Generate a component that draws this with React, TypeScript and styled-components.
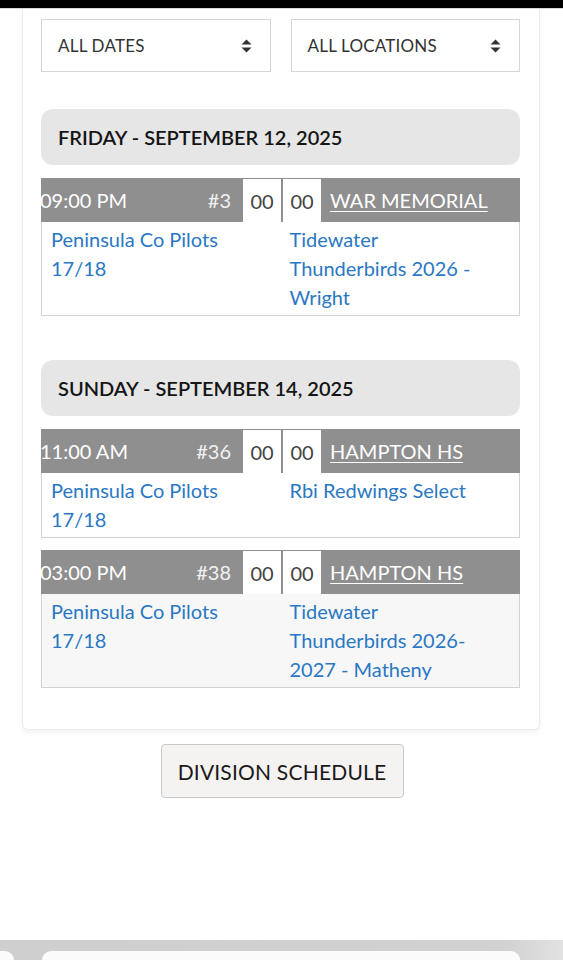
import React from 'react';
import styled, { createGlobalStyle } from 'styled-components';

const GlobalStyle = createGlobalStyle`
  html, body {
    margin: 0;
    padding: 0;
    background: #ffffff;
  }
  body {
    font-family: Lato, "Noto Sans", "Liberation Sans", sans-serif;
  }
  * {
    box-sizing: border-box;
  }
`;

const Page = styled.div`
  width: 563px;
  height: 960px;
  display: flex;
  flex-direction: column;
  overflow: hidden;
  background: #ffffff;
`;

const TopBar = styled.div`
  height: 9px;
  background: #000000;
  border-bottom: 1px solid #d8d8d8;
  flex-shrink: 0;
`;

const Card = styled.div`
  margin: 0 23px 0 22px;
  padding: 10px 19px 41px 18px;
  border: 1px solid #ececec;
  border-top: none;
  border-radius: 0 0 6px 6px;
  box-shadow: 0 3px 6px rgba(0, 0, 0, 0.05);
  background: #ffffff;
`;

const Filters = styled.div`
  display: grid;
  grid-template-columns: 1fr 1fr;
  gap: 20px;
  margin-bottom: 37px;
`;

const Select = styled.div`
  height: 53px;
  border: 1px solid #d6d6d6;
  display: flex;
  align-items: center;
  justify-content: space-between;
  padding: 0 18px 0 16px;
  font-size: 17px;
  color: #333333;
  letter-spacing: 0.2px;
`;

const DateHeader = styled.div`
  height: 56px;
  border-radius: 12px;
  background: #e6e6e6;
  display: flex;
  align-items: center;
  padding-left: 17px;
  font-size: 20px;
  font-weight: 600;
  color: #151515;
  margin-bottom: 13px;
`;

const Day = styled.section`
  margin-bottom: 44px;
  &:last-child {
    margin-bottom: 0;
  }
`;

const Game = styled.div`
  margin-bottom: 12px;
  &:last-child {
    margin-bottom: 0;
  }
`;

const GameHead = styled.div`
  height: 44px;
  background: #8f8f8f;
  display: flex;
  align-items: stretch;
  color: #ffffff;
  font-size: 20px;
`;

const Time = styled.div`
  width: 150px;
  display: flex;
  align-items: center;
  margin-left: -1px;
`;

const GameNo = styled.div`
  width: 53px;
  display: flex;
  align-items: center;
  justify-content: flex-end;
  padding-right: 12px;
  color: #f2f2f2;
`;

const Score = styled.div`
  width: 38px;
  margin-top: 1px;
  background: #ffffff;
  color: #444444;
  display: flex;
  align-items: center;
  justify-content: center;
  & + & {
    margin-left: 2px;
  }
`;

const Location = styled.a`
  display: flex;
  align-items: center;
  padding-left: 9px;
  color: #ffffff;
  text-decoration: underline;
  text-underline-offset: 3px;
  text-decoration-thickness: 1px;
`;

const GameBody = styled.div<{ $alt?: boolean }>`
  display: grid;
  grid-template-columns: 1fr 1fr;
  padding: 3px 0;
  border: 1px solid #d2d2d2;
  border-top: none;
  background: ${({ $alt }) => ($alt ? '#f7f7f7' : '#ffffff')};
`;

const Team = styled.a`
  padding: 0 34px 0 9px;
  font-size: 20px;
  line-height: 29px;
  color: #2a78c4;
  text-decoration: none;
`;

const ButtonRow = styled.div`
  display: flex;
  justify-content: center;
  margin-top: 14px;
`;

const ScheduleButton = styled.button`
  width: 243px;
  height: 54px;
  margin-left: 1px;
  background: #f5f3f1;
  border: 1px solid #c9c9c9;
  border-radius: 4px;
  font-family: inherit;
  font-size: 21px;
  color: #1a1a1a;
  letter-spacing: 0.2px;
`;

const Toolbar = styled.div`
  margin-top: auto;
  height: 20px;
  background: linear-gradient(90deg, #cfcfcf 0%, #d2d2d2 90%, #e2e2e2 100%);
  display: flex;
  align-items: flex-end;
  flex-shrink: 0;
`;

const ToolbarTab = styled.div<{ $w: number; $ml: number }>`
  width: ${({ $w }) => $w}px;
  margin-left: ${({ $ml }) => $ml}px;
  height: 9px;
  background: #fbfbfb;
  border-radius: 14px 14px 0 0;
`;

const Arrows = () => (
  <svg width="11" height="14" viewBox="0 0 11 14">
    <path d="M5.5 0.5 L10.5 5.5 L0.5 5.5 Z" fill="#333" />
    <path d="M0.5 8.5 L10.5 8.5 L5.5 13.5 Z" fill="#333" />
  </svg>
);

type GameData = {
  time: string;
  no: string;
  location: string;
  home: string;
  away: string;
  alt?: boolean;
};

const days: { label: string; games: GameData[] }[] = [
  {
    label: 'FRIDAY - SEPTEMBER 12, 2025',
    games: [
      {
        time: '09:00 PM',
        no: '#3',
        location: 'WAR MEMORIAL',
        home: 'Peninsula Co Pilots 17/18',
        away: 'Tidewater Thunderbirds 2026 - Wright',
      },
    ],
  },
  {
    label: 'SUNDAY - SEPTEMBER 14, 2025',
    games: [
      {
        time: '11:00 AM',
        no: '#36',
        location: 'HAMPTON HS',
        home: 'Peninsula Co Pilots 17/18',
        away: 'Rbi Redwings Select',
      },
      {
        time: '03:00 PM',
        no: '#38',
        location: 'HAMPTON HS',
        home: 'Peninsula Co Pilots 17/18',
        away: 'Tidewater Thunderbirds 2026-2027 - Matheny',
        alt: true,
      },
    ],
  },
];

export default function App() {
  return (
    <>
      <GlobalStyle />
      <Page>
        <TopBar />
        <Card>
          <Filters>
            <Select>
              ALL DATES
              <Arrows />
            </Select>
            <Select>
              ALL LOCATIONS
              <Arrows />
            </Select>
          </Filters>

          {days.map((day) => (
            <Day key={day.label}>
              <DateHeader>{day.label}</DateHeader>
              {day.games.map((g) => (
                <Game key={g.no}>
                  <GameHead>
                    <Time>{g.time}</Time>
                    <GameNo>{g.no}</GameNo>
                    <Score>00</Score>
                    <Score>00</Score>
                    <Location href="#">{g.location}</Location>
                  </GameHead>
                  <GameBody $alt={g.alt}>
                    <Team href="#">{g.home}</Team>
                    <Team href="#">{g.away}</Team>
                  </GameBody>
                </Game>
              ))}
            </Day>
          ))}
        </Card>

        <ButtonRow>
          <ScheduleButton>DIVISION SCHEDULE</ScheduleButton>
        </ButtonRow>

        <Toolbar>
          <ToolbarTab $w={24} $ml={-10} />
          <ToolbarTab $w={478} $ml={28} />
        </Toolbar>
      </Page>
    </>
  );
}
